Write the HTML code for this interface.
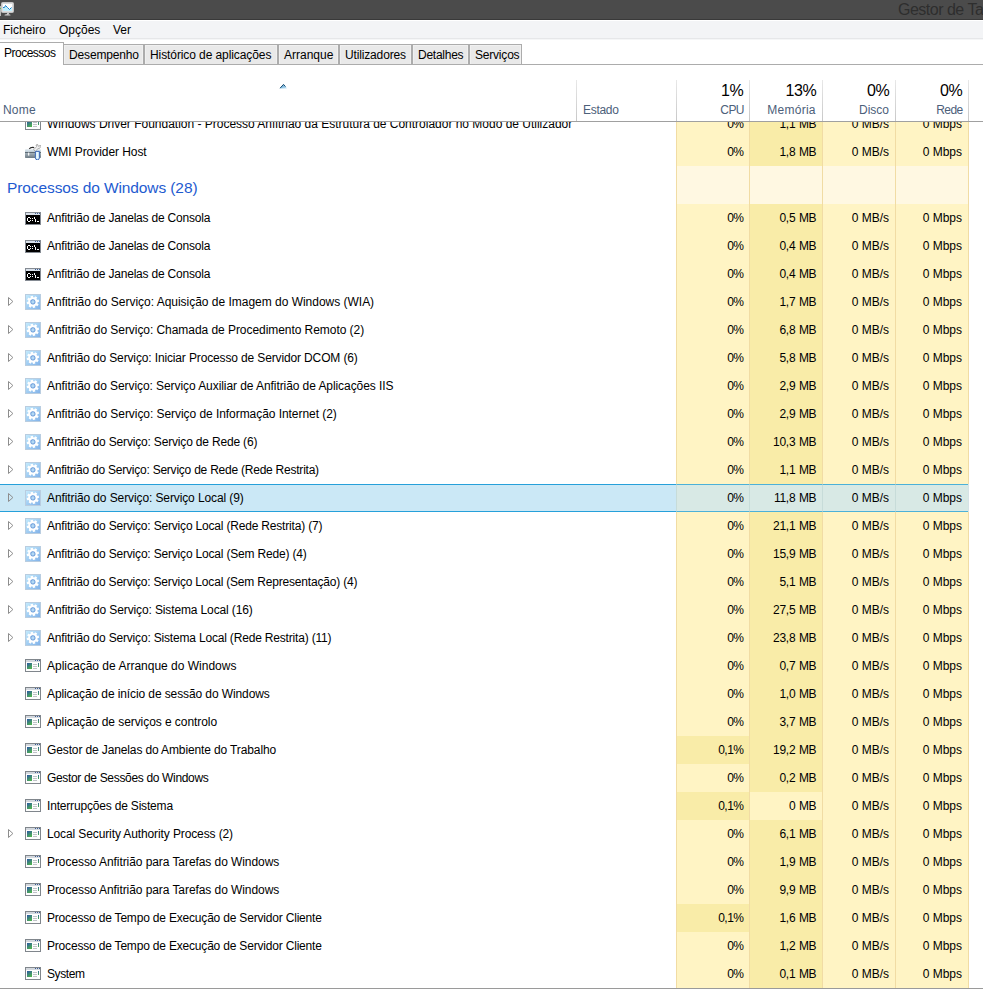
<!DOCTYPE html>
<html><head><meta charset="utf-8">
<style>
*{margin:0;padding:0;box-sizing:border-box}
html,body{width:983px;height:989px;overflow:hidden;background:#fff;font-family:"Liberation Sans",sans-serif;font-size:12px;color:#000}
.abs{position:absolute}
#title{position:absolute;left:0;top:0;width:983px;height:20px;background:#4b4b4b;border-bottom:1px solid #393939}
#title .tt{position:absolute;left:898px;top:1px;letter-spacing:-0.5px;font-size:16px;color:#2e2e2e;white-space:nowrap;line-height:17px}
#wl{position:absolute;left:0;top:20px;width:983px;height:1px;background:#fff}
#menu{position:absolute;left:0;top:21px;width:983px;height:17px;background:#f3f4f6}
#menu span{position:absolute;top:1px;line-height:17px;white-space:nowrap}
#ml1{position:absolute;left:0;top:38px;width:983px;height:1px;background:#e6e7e9}
#ml2{position:absolute;left:0;top:39px;width:983px;height:1px;background:#f5f6f7}
#tabline{position:absolute;left:0;top:64px;width:983px;height:1px;background:#acacac}
.tab{position:absolute;top:44px;height:21px;border:1px solid #acacac;background:#e9e9e9;box-shadow:inset 1px 1px 0 #f0f0f0, inset -1px 0 0 #f0f0f0}
.tab span{position:absolute;left:5px;top:3px;line-height:14px;white-space:nowrap}
.tab.act{top:42px;height:23px;border-left:none;border-bottom:none;background:#fff;box-shadow:none}
.tab.act span{left:4px;top:3px}
.hd{position:absolute;color:#4c607a;white-space:nowrap;line-height:14px}
.hp{position:absolute;top:82px;font-size:16px;line-height:18px;letter-spacing:-0.4px;margin-right:-0.4px;white-space:nowrap}
.hd.r{top:103px}
.dv{position:absolute;top:80px;width:1px;height:41px;background:linear-gradient(#e8e8e8,#c8c8c8)}
#hline{position:absolute;left:0;top:121px;width:983px;height:1px;background:#a0a0a0}
#list{position:absolute;left:0;top:122px;width:983px;height:866px;overflow:hidden}
#inner{position:absolute;left:0;top:-122px;width:983px;height:989px}
.row{position:absolute;left:0;width:983px;height:28px}
.row .nm{position:absolute;left:47px;top:7px;line-height:14px;white-space:nowrap}
.row .ic{position:absolute;left:25px;top:6px}
.row .exp{position:absolute;left:8px;top:9px}
.c{position:absolute;top:0;width:73px;height:28px;border-left:1px solid #f1dca4}
.c span{position:absolute;right:6px;top:7px;line-height:14px;white-space:nowrap}
.grp{position:absolute;left:0;width:983px;height:38px}
.gt{position:absolute;left:7px;top:13px;font-size:15.5px;line-height:18px;letter-spacing:-0.1px;color:#1e5bd0;white-space:nowrap}
.gc{position:absolute;top:0;width:73px;height:38px;background:#fff8e2;border-left:1px solid #f1dca4}
#rb{position:absolute;left:968px;top:122px;width:1px;height:866px;background:#f1dca4}
.row.sel{width:968px;background:#cbe8f6;border-top:1px solid #26a0da;border-bottom:1px solid #26a0da}
.row.sel .nm{top:6px} .row.sel .ic{top:5px} .row.sel .exp{top:8px}
.row.sel .c{top:-1px;height:28px;background:#d8e9e5 !important;border-top:1px solid #4cb1d8;border-bottom:1px solid #4cb1d8;border-left-color:#c7dcd9}
.row.sel .c span{top:6px}
#bline{position:absolute;left:0;top:988px;width:983px;height:1px;background:#9a9a9a}
</style></head><body>
<svg width="0" height="0" style="position:absolute">
<defs>
<linearGradient id="gbl" x1="0" y1="0" x2="1" y2="1"><stop offset="0" stop-color="#c6ecfd"/><stop offset="1" stop-color="#7fb0e8"/></linearGradient>
<linearGradient id="ggr" x1="0" y1="0" x2="0.6" y2="1"><stop offset="0" stop-color="#2c56a8"/><stop offset="1" stop-color="#4caf50"/></linearGradient>
<linearGradient id="gtb" x1="0" y1="0" x2="0" y2="1"><stop offset="0" stop-color="#c9d6de"/><stop offset="1" stop-color="#6d7b85"/></linearGradient>
</defs>
</svg>
<div id="title"><svg class="abs" style="left:0;top:0" width="16" height="16" viewBox="0 0 16 16">
<rect x="1.5" y="2.5" width="12" height="10" rx="1" fill="#dcdcdc" stroke="#c4c4c4"/>
<rect x="3" y="4" width="9" height="7" fill="#ffffff"/>
<path d="M3 7.5 L4.5 7.5 L5.5 5.5 L7.5 7.5 L9.5 9.5 L11.5 7.5 L12 7.5 L12 11 L3 11 Z" fill="#bfeefc"/>
<path d="M3 7.5 L4.5 7.5 L5.5 5.5 L7.5 7.5 L9.5 9.5 L11.5 7.5" fill="none" stroke="#2080c8" stroke-width="1"/>
<rect x="7" y="13" width="2" height="1" fill="#c8c8c8"/>
<path d="M4.5 15.5 Q4.5 14 7.5 14 Q10.5 14 10.5 15.5 Z" fill="#d2d2d2"/>
</svg><div class="abs" style="left:0;top:6px;width:1px;height:10px;background:#b8b8b8"></div><div class="abs" style="left:0;top:8px;width:1px;height:1px;background:#62c050"></div><span class="tt">Gestor de Ta</span></div>
<div id="wl"></div>
<div id="menu"><span style="left:3px">Ficheiro</span><span style="left:59px">Opções</span><span style="left:113px">Ver</span></div>
<div id="ml1"></div><div id="ml2"></div>
<div id="tabline"></div>
<div class="tab act" style="left:0px;width:64px"><span style="letter-spacing:-0.5px">Processos</span></div><div class="tab" style="left:63px;width:81px"><span style="letter-spacing:-0.15px">Desempenho</span></div><div class="tab" style="left:144px;width:134px"><span style="letter-spacing:-0.09px">Histórico de aplicações</span></div><div class="tab" style="left:278px;width:61px"><span style="letter-spacing:0px">Arranque</span></div><div class="tab" style="left:339px;width:73px"><span style="letter-spacing:-0.15px">Utilizadores</span></div><div class="tab" style="left:412px;width:57px"><span style="letter-spacing:-0.26px">Detalhes</span></div><div class="tab" style="left:469px;width:53px"><span style="letter-spacing:-0.2px">Serviços</span></div>
<div class="hd" style="left:3px;top:103px;letter-spacing:0.2px">Nome</div>
<div class="hd" style="left:583px;top:103px;letter-spacing:-0.3px">Estado</div>
<div class="hp" style="right:240px">1%</div><div class="hp" style="right:167px">13%</div><div class="hp" style="right:94px">0%</div><div class="hp" style="right:21px">0%</div>
<div class="hd r" style="right:240px;letter-spacing:-0.6px;margin-right:-0.9px">CPU</div><div class="hd r" style="right:167px;letter-spacing:0.25px;margin-right:0.25px">Memória</div><div class="hd r" style="right:94px">Disco</div><div class="hd r" style="right:21px;letter-spacing:-0.6px;margin-right:-0.6px">Rede</div>
<svg class="abs" style="left:279px;top:83px" width="9" height="6" viewBox="0 0 9 6"><defs><linearGradient id="sa" x1="0" y1="0" x2="1" y2="1"><stop offset="0" stop-color="#3f8fc6"/><stop offset="1" stop-color="#d2eefc"/></linearGradient></defs><path d="M0.8 5.6 L4.5 1.2 L8.2 5.6 Z" fill="url(#sa)"/><path d="M1 5.2 L4.5 1.4 L6.5 3.6" fill="none" stroke="#1e4f72" stroke-width="1"/></svg>
<div class="dv" style="left:576px"></div><div class="dv" style="left:676px"></div><div class="dv" style="left:749px"></div><div class="dv" style="left:822px"></div><div class="dv" style="left:895px"></div><div class="dv" style="left:968px"></div>
<div id="hline"></div>
<div id="list"><div id="inner">
<div class="row" style="top:110px"><svg class="ic" width="16" height="16" viewBox="0 0 16 16" shape-rendering="crispEdges">
<rect x="0" y="1" width="16" height="13" fill="#80868c"/>
<rect x="1" y="2" width="14" height="2" fill="#d3d8de"/>
<rect x="10" y="2" width="1" height="1" fill="#3c5c94"/><rect x="12" y="2" width="1" height="1" fill="#3c5c94"/><rect x="14" y="2" width="1" height="1" fill="#3c5c94"/>
<rect x="1" y="4" width="14" height="9" fill="#fdfdfd"/>
<rect x="2" y="5" width="5" height="6" fill="url(#ggr)"/>
<rect x="8" y="6" width="4" height="1" fill="#bfc3c7"/><rect x="8" y="8" width="4" height="1" fill="#bfc3c7"/><rect x="8" y="10" width="4" height="1" fill="#bfc3c7"/>
<rect x="13" y="5" width="1" height="4" fill="url(#ggr)"/>
</svg><span class="nm" style="letter-spacing:-0.011px">Windows Driver Foundation - Processo Anfitrião da Estrutura de Controlador no Modo de Utilizador</span><div class="c" style="left:676px;background:#fff4c4"><span style="letter-spacing:-0.5px;word-spacing:0px;margin-right:-0.5px">0%</span></div><div class="c" style="left:749px;background:#f9eca8"><span style="letter-spacing:-0.3px;word-spacing:0.6px;margin-right:-0.3px">1,1 MB</span></div><div class="c" style="left:822px;background:#fff4c4"><span style="letter-spacing:0px;word-spacing:0px;margin-right:0px">0 MB/s</span></div><div class="c" style="left:895px;background:#fff4c4"><span style="letter-spacing:0px;word-spacing:0px;margin-right:0px">0 Mbps</span></div></div><div class="row" style="top:138px"><svg class="ic" width="16" height="16" viewBox="0 0 16 16">
<path d="M4.3 5 Q5.5 3 9.2 3.6" fill="none" stroke="#2a2a2a" stroke-width="1.2"/>
<rect x="0" y="5.4" width="16" height="8.6" rx="0.8" fill="url(#gtb)"/>
<rect x="0" y="6" width="16" height="1.6" fill="#d0dde6"/>
<rect x="0" y="8" width="16" height="0.9" fill="#56636e"/>
<rect x="3" y="8.6" width="1.3" height="3" fill="#f6f6f6"/>
<path d="M8.6 5.8 L11.6 2.6 L11 1 L12.6 0.3 L13 2 L14.3 2.3 L15.1 1 L15.8 2.6 L14.6 4.4 L13 4.6 L10.4 7.2 Z" fill="#f2f2f2" stroke="#6e6e6e" stroke-width="0.5"/>
<path d="M10.4 7.4 V13.8 A2 2 0 0 0 14.4 13.8 V7.4 Z" fill="#d6f1fc" stroke="#3f6bb8" stroke-width="1"/>
<rect x="11.6" y="8.2" width="1.2" height="5.6" fill="#f4fcff"/>
</svg><span class="nm" style="letter-spacing:-0.062px">WMI Provider Host</span><div class="c" style="left:676px;background:#fff4c4"><span style="letter-spacing:-0.5px;word-spacing:0px;margin-right:-0.5px">0%</span></div><div class="c" style="left:749px;background:#f9eca8"><span style="letter-spacing:-0.3px;word-spacing:0.6px;margin-right:-0.3px">1,8 MB</span></div><div class="c" style="left:822px;background:#fff4c4"><span style="letter-spacing:0px;word-spacing:0px;margin-right:0px">0 MB/s</span></div><div class="c" style="left:895px;background:#fff4c4"><span style="letter-spacing:0px;word-spacing:0px;margin-right:0px">0 Mbps</span></div></div><div class="grp" style="top:166px"><span class="gt">Processos do Windows (28)</span><div class="gc" style="left:676px"></div><div class="gc" style="left:749px"></div><div class="gc" style="left:822px"></div><div class="gc" style="left:895px"></div></div><div class="row" style="top:204px"><svg class="ic" width="16" height="16" viewBox="0 0 16 16" shape-rendering="crispEdges">
<rect x="0" y="2" width="16" height="13" fill="#858b93"/>
<rect x="1" y="3" width="14" height="2" fill="#d9e1ea"/>
<rect x="10" y="3" width="1" height="1" fill="#3e5f95"/><rect x="12" y="3" width="1" height="1" fill="#3e5f95"/><rect x="14" y="3" width="1" height="1" fill="#3e5f95"/>
<rect x="1" y="5" width="14" height="9" fill="#000"/>
<rect x="3" y="7" width="2" height="1" fill="#fff"/><rect x="2" y="8" width="1" height="3" fill="#fff"/><rect x="3" y="11" width="2" height="1" fill="#fff"/><rect x="5" y="8" width="1" height="1" fill="#fff"/><rect x="5" y="10" width="1" height="1" fill="#fff"/>
<rect x="7" y="8" width="1" height="1" fill="#fff"/><rect x="7" y="10" width="1" height="1" fill="#fff"/>
<rect x="9" y="7" width="1" height="2" fill="#fff"/><rect x="10" y="9" width="1" height="3" fill="#fff"/>
<rect x="12" y="11" width="2" height="1" fill="#fff"/>
</svg><span class="nm" style="letter-spacing:-0.200px">Anfitrião de Janelas de Consola</span><div class="c" style="left:676px;background:#fff4c4"><span style="letter-spacing:-0.5px;word-spacing:0px;margin-right:-0.5px">0%</span></div><div class="c" style="left:749px;background:#f9eca8"><span style="letter-spacing:-0.3px;word-spacing:0.6px;margin-right:-0.3px">0,5 MB</span></div><div class="c" style="left:822px;background:#fff4c4"><span style="letter-spacing:0px;word-spacing:0px;margin-right:0px">0 MB/s</span></div><div class="c" style="left:895px;background:#fff4c4"><span style="letter-spacing:0px;word-spacing:0px;margin-right:0px">0 Mbps</span></div></div><div class="row" style="top:232px"><svg class="ic" width="16" height="16" viewBox="0 0 16 16" shape-rendering="crispEdges">
<rect x="0" y="2" width="16" height="13" fill="#858b93"/>
<rect x="1" y="3" width="14" height="2" fill="#d9e1ea"/>
<rect x="10" y="3" width="1" height="1" fill="#3e5f95"/><rect x="12" y="3" width="1" height="1" fill="#3e5f95"/><rect x="14" y="3" width="1" height="1" fill="#3e5f95"/>
<rect x="1" y="5" width="14" height="9" fill="#000"/>
<rect x="3" y="7" width="2" height="1" fill="#fff"/><rect x="2" y="8" width="1" height="3" fill="#fff"/><rect x="3" y="11" width="2" height="1" fill="#fff"/><rect x="5" y="8" width="1" height="1" fill="#fff"/><rect x="5" y="10" width="1" height="1" fill="#fff"/>
<rect x="7" y="8" width="1" height="1" fill="#fff"/><rect x="7" y="10" width="1" height="1" fill="#fff"/>
<rect x="9" y="7" width="1" height="2" fill="#fff"/><rect x="10" y="9" width="1" height="3" fill="#fff"/>
<rect x="12" y="11" width="2" height="1" fill="#fff"/>
</svg><span class="nm" style="letter-spacing:-0.200px">Anfitrião de Janelas de Consola</span><div class="c" style="left:676px;background:#fff4c4"><span style="letter-spacing:-0.5px;word-spacing:0px;margin-right:-0.5px">0%</span></div><div class="c" style="left:749px;background:#f9eca8"><span style="letter-spacing:-0.3px;word-spacing:0.6px;margin-right:-0.3px">0,4 MB</span></div><div class="c" style="left:822px;background:#fff4c4"><span style="letter-spacing:0px;word-spacing:0px;margin-right:0px">0 MB/s</span></div><div class="c" style="left:895px;background:#fff4c4"><span style="letter-spacing:0px;word-spacing:0px;margin-right:0px">0 Mbps</span></div></div><div class="row" style="top:260px"><svg class="ic" width="16" height="16" viewBox="0 0 16 16" shape-rendering="crispEdges">
<rect x="0" y="2" width="16" height="13" fill="#858b93"/>
<rect x="1" y="3" width="14" height="2" fill="#d9e1ea"/>
<rect x="10" y="3" width="1" height="1" fill="#3e5f95"/><rect x="12" y="3" width="1" height="1" fill="#3e5f95"/><rect x="14" y="3" width="1" height="1" fill="#3e5f95"/>
<rect x="1" y="5" width="14" height="9" fill="#000"/>
<rect x="3" y="7" width="2" height="1" fill="#fff"/><rect x="2" y="8" width="1" height="3" fill="#fff"/><rect x="3" y="11" width="2" height="1" fill="#fff"/><rect x="5" y="8" width="1" height="1" fill="#fff"/><rect x="5" y="10" width="1" height="1" fill="#fff"/>
<rect x="7" y="8" width="1" height="1" fill="#fff"/><rect x="7" y="10" width="1" height="1" fill="#fff"/>
<rect x="9" y="7" width="1" height="2" fill="#fff"/><rect x="10" y="9" width="1" height="3" fill="#fff"/>
<rect x="12" y="11" width="2" height="1" fill="#fff"/>
</svg><span class="nm" style="letter-spacing:-0.200px">Anfitrião de Janelas de Consola</span><div class="c" style="left:676px;background:#fff4c4"><span style="letter-spacing:-0.5px;word-spacing:0px;margin-right:-0.5px">0%</span></div><div class="c" style="left:749px;background:#f9eca8"><span style="letter-spacing:-0.3px;word-spacing:0.6px;margin-right:-0.3px">0,4 MB</span></div><div class="c" style="left:822px;background:#fff4c4"><span style="letter-spacing:0px;word-spacing:0px;margin-right:0px">0 MB/s</span></div><div class="c" style="left:895px;background:#fff4c4"><span style="letter-spacing:0px;word-spacing:0px;margin-right:0px">0 Mbps</span></div></div><div class="row" style="top:288px"><svg class="exp" width="7" height="10" viewBox="0 0 7 10"><path d="M0.5 0.5 L4.9 4.5 L0.5 8.5 Z" fill="none" stroke="#8d8d8d" stroke-width="1"/></svg><svg class="ic" width="16" height="16" viewBox="0 0 16 16">
<rect x="0.5" y="0.5" width="15" height="15" fill="url(#gbl)" stroke="#b9cde0"/>
<g transform="translate(7.9 7.9) rotate(-12)" fill="#fff">
<circle r="4.7"/>
<rect x="-1.2" y="-6.1" width="2.4" height="12.2"/>
<rect x="-1.2" y="-6.1" width="2.4" height="12.2" transform="rotate(45)"/>
<rect x="-1.2" y="-6.1" width="2.4" height="12.2" transform="rotate(90)"/>
<rect x="-1.2" y="-6.1" width="2.4" height="12.2" transform="rotate(135)"/>
<circle r="2.1" fill="#b2d8f4" stroke="#6f9fdb" stroke-width="1"/>
</g>
</svg><span class="nm" style="letter-spacing:-0.018px">Anfitrião do Serviço: Aquisição de Imagem do Windows (WIA)</span><div class="c" style="left:676px;background:#fff4c4"><span style="letter-spacing:-0.5px;word-spacing:0px;margin-right:-0.5px">0%</span></div><div class="c" style="left:749px;background:#f9eca8"><span style="letter-spacing:-0.3px;word-spacing:0.6px;margin-right:-0.3px">1,7 MB</span></div><div class="c" style="left:822px;background:#fff4c4"><span style="letter-spacing:0px;word-spacing:0px;margin-right:0px">0 MB/s</span></div><div class="c" style="left:895px;background:#fff4c4"><span style="letter-spacing:0px;word-spacing:0px;margin-right:0px">0 Mbps</span></div></div><div class="row" style="top:316px"><svg class="exp" width="7" height="10" viewBox="0 0 7 10"><path d="M0.5 0.5 L4.9 4.5 L0.5 8.5 Z" fill="none" stroke="#8d8d8d" stroke-width="1"/></svg><svg class="ic" width="16" height="16" viewBox="0 0 16 16">
<rect x="0.5" y="0.5" width="15" height="15" fill="url(#gbl)" stroke="#b9cde0"/>
<g transform="translate(7.9 7.9) rotate(-12)" fill="#fff">
<circle r="4.7"/>
<rect x="-1.2" y="-6.1" width="2.4" height="12.2"/>
<rect x="-1.2" y="-6.1" width="2.4" height="12.2" transform="rotate(45)"/>
<rect x="-1.2" y="-6.1" width="2.4" height="12.2" transform="rotate(90)"/>
<rect x="-1.2" y="-6.1" width="2.4" height="12.2" transform="rotate(135)"/>
<circle r="2.1" fill="#b2d8f4" stroke="#6f9fdb" stroke-width="1"/>
</g>
</svg><span class="nm" style="letter-spacing:-0.055px">Anfitrião do Serviço: Chamada de Procedimento Remoto (2)</span><div class="c" style="left:676px;background:#fff4c4"><span style="letter-spacing:-0.5px;word-spacing:0px;margin-right:-0.5px">0%</span></div><div class="c" style="left:749px;background:#f9eca8"><span style="letter-spacing:-0.3px;word-spacing:0.6px;margin-right:-0.3px">6,8 MB</span></div><div class="c" style="left:822px;background:#fff4c4"><span style="letter-spacing:0px;word-spacing:0px;margin-right:0px">0 MB/s</span></div><div class="c" style="left:895px;background:#fff4c4"><span style="letter-spacing:0px;word-spacing:0px;margin-right:0px">0 Mbps</span></div></div><div class="row" style="top:344px"><svg class="exp" width="7" height="10" viewBox="0 0 7 10"><path d="M0.5 0.5 L4.9 4.5 L0.5 8.5 Z" fill="none" stroke="#8d8d8d" stroke-width="1"/></svg><svg class="ic" width="16" height="16" viewBox="0 0 16 16">
<rect x="0.5" y="0.5" width="15" height="15" fill="url(#gbl)" stroke="#b9cde0"/>
<g transform="translate(7.9 7.9) rotate(-12)" fill="#fff">
<circle r="4.7"/>
<rect x="-1.2" y="-6.1" width="2.4" height="12.2"/>
<rect x="-1.2" y="-6.1" width="2.4" height="12.2" transform="rotate(45)"/>
<rect x="-1.2" y="-6.1" width="2.4" height="12.2" transform="rotate(90)"/>
<rect x="-1.2" y="-6.1" width="2.4" height="12.2" transform="rotate(135)"/>
<circle r="2.1" fill="#b2d8f4" stroke="#6f9fdb" stroke-width="1"/>
</g>
</svg><span class="nm" style="letter-spacing:-0.138px">Anfitrião do Serviço: Iniciar Processo de Servidor DCOM (6)</span><div class="c" style="left:676px;background:#fff4c4"><span style="letter-spacing:-0.5px;word-spacing:0px;margin-right:-0.5px">0%</span></div><div class="c" style="left:749px;background:#f9eca8"><span style="letter-spacing:-0.3px;word-spacing:0.6px;margin-right:-0.3px">5,8 MB</span></div><div class="c" style="left:822px;background:#fff4c4"><span style="letter-spacing:0px;word-spacing:0px;margin-right:0px">0 MB/s</span></div><div class="c" style="left:895px;background:#fff4c4"><span style="letter-spacing:0px;word-spacing:0px;margin-right:0px">0 Mbps</span></div></div><div class="row" style="top:372px"><svg class="exp" width="7" height="10" viewBox="0 0 7 10"><path d="M0.5 0.5 L4.9 4.5 L0.5 8.5 Z" fill="none" stroke="#8d8d8d" stroke-width="1"/></svg><svg class="ic" width="16" height="16" viewBox="0 0 16 16">
<rect x="0.5" y="0.5" width="15" height="15" fill="url(#gbl)" stroke="#b9cde0"/>
<g transform="translate(7.9 7.9) rotate(-12)" fill="#fff">
<circle r="4.7"/>
<rect x="-1.2" y="-6.1" width="2.4" height="12.2"/>
<rect x="-1.2" y="-6.1" width="2.4" height="12.2" transform="rotate(45)"/>
<rect x="-1.2" y="-6.1" width="2.4" height="12.2" transform="rotate(90)"/>
<rect x="-1.2" y="-6.1" width="2.4" height="12.2" transform="rotate(135)"/>
<circle r="2.1" fill="#b2d8f4" stroke="#6f9fdb" stroke-width="1"/>
</g>
</svg><span class="nm" style="letter-spacing:-0.074px">Anfitrião do Serviço: Serviço Auxiliar de Anfitrião de Aplicações IIS</span><div class="c" style="left:676px;background:#fff4c4"><span style="letter-spacing:-0.5px;word-spacing:0px;margin-right:-0.5px">0%</span></div><div class="c" style="left:749px;background:#f9eca8"><span style="letter-spacing:-0.3px;word-spacing:0.6px;margin-right:-0.3px">2,9 MB</span></div><div class="c" style="left:822px;background:#fff4c4"><span style="letter-spacing:0px;word-spacing:0px;margin-right:0px">0 MB/s</span></div><div class="c" style="left:895px;background:#fff4c4"><span style="letter-spacing:0px;word-spacing:0px;margin-right:0px">0 Mbps</span></div></div><div class="row" style="top:400px"><svg class="exp" width="7" height="10" viewBox="0 0 7 10"><path d="M0.5 0.5 L4.9 4.5 L0.5 8.5 Z" fill="none" stroke="#8d8d8d" stroke-width="1"/></svg><svg class="ic" width="16" height="16" viewBox="0 0 16 16">
<rect x="0.5" y="0.5" width="15" height="15" fill="url(#gbl)" stroke="#b9cde0"/>
<g transform="translate(7.9 7.9) rotate(-12)" fill="#fff">
<circle r="4.7"/>
<rect x="-1.2" y="-6.1" width="2.4" height="12.2"/>
<rect x="-1.2" y="-6.1" width="2.4" height="12.2" transform="rotate(45)"/>
<rect x="-1.2" y="-6.1" width="2.4" height="12.2" transform="rotate(90)"/>
<rect x="-1.2" y="-6.1" width="2.4" height="12.2" transform="rotate(135)"/>
<circle r="2.1" fill="#b2d8f4" stroke="#6f9fdb" stroke-width="1"/>
</g>
</svg><span class="nm" style="letter-spacing:-0.055px">Anfitrião do Serviço: Serviço de Informação Internet (2)</span><div class="c" style="left:676px;background:#fff4c4"><span style="letter-spacing:-0.5px;word-spacing:0px;margin-right:-0.5px">0%</span></div><div class="c" style="left:749px;background:#f9eca8"><span style="letter-spacing:-0.3px;word-spacing:0.6px;margin-right:-0.3px">2,9 MB</span></div><div class="c" style="left:822px;background:#fff4c4"><span style="letter-spacing:0px;word-spacing:0px;margin-right:0px">0 MB/s</span></div><div class="c" style="left:895px;background:#fff4c4"><span style="letter-spacing:0px;word-spacing:0px;margin-right:0px">0 Mbps</span></div></div><div class="row" style="top:428px"><svg class="exp" width="7" height="10" viewBox="0 0 7 10"><path d="M0.5 0.5 L4.9 4.5 L0.5 8.5 Z" fill="none" stroke="#8d8d8d" stroke-width="1"/></svg><svg class="ic" width="16" height="16" viewBox="0 0 16 16">
<rect x="0.5" y="0.5" width="15" height="15" fill="url(#gbl)" stroke="#b9cde0"/>
<g transform="translate(7.9 7.9) rotate(-12)" fill="#fff">
<circle r="4.7"/>
<rect x="-1.2" y="-6.1" width="2.4" height="12.2"/>
<rect x="-1.2" y="-6.1" width="2.4" height="12.2" transform="rotate(45)"/>
<rect x="-1.2" y="-6.1" width="2.4" height="12.2" transform="rotate(90)"/>
<rect x="-1.2" y="-6.1" width="2.4" height="12.2" transform="rotate(135)"/>
<circle r="2.1" fill="#b2d8f4" stroke="#6f9fdb" stroke-width="1"/>
</g>
</svg><span class="nm" style="letter-spacing:-0.175px">Anfitrião do Serviço: Serviço de Rede (6)</span><div class="c" style="left:676px;background:#fff4c4"><span style="letter-spacing:-0.5px;word-spacing:0px;margin-right:-0.5px">0%</span></div><div class="c" style="left:749px;background:#f9eca8"><span style="letter-spacing:-0.3px;word-spacing:0.6px;margin-right:-0.3px">10,3 MB</span></div><div class="c" style="left:822px;background:#fff4c4"><span style="letter-spacing:0px;word-spacing:0px;margin-right:0px">0 MB/s</span></div><div class="c" style="left:895px;background:#fff4c4"><span style="letter-spacing:0px;word-spacing:0px;margin-right:0px">0 Mbps</span></div></div><div class="row" style="top:456px"><svg class="exp" width="7" height="10" viewBox="0 0 7 10"><path d="M0.5 0.5 L4.9 4.5 L0.5 8.5 Z" fill="none" stroke="#8d8d8d" stroke-width="1"/></svg><svg class="ic" width="16" height="16" viewBox="0 0 16 16">
<rect x="0.5" y="0.5" width="15" height="15" fill="url(#gbl)" stroke="#b9cde0"/>
<g transform="translate(7.9 7.9) rotate(-12)" fill="#fff">
<circle r="4.7"/>
<rect x="-1.2" y="-6.1" width="2.4" height="12.2"/>
<rect x="-1.2" y="-6.1" width="2.4" height="12.2" transform="rotate(45)"/>
<rect x="-1.2" y="-6.1" width="2.4" height="12.2" transform="rotate(90)"/>
<rect x="-1.2" y="-6.1" width="2.4" height="12.2" transform="rotate(135)"/>
<circle r="2.1" fill="#b2d8f4" stroke="#6f9fdb" stroke-width="1"/>
</g>
</svg><span class="nm" style="letter-spacing:-0.231px">Anfitrião do Serviço: Serviço de Rede (Rede Restrita)</span><div class="c" style="left:676px;background:#fff4c4"><span style="letter-spacing:-0.5px;word-spacing:0px;margin-right:-0.5px">0%</span></div><div class="c" style="left:749px;background:#f9eca8"><span style="letter-spacing:-0.3px;word-spacing:0.6px;margin-right:-0.3px">1,1 MB</span></div><div class="c" style="left:822px;background:#fff4c4"><span style="letter-spacing:0px;word-spacing:0px;margin-right:0px">0 MB/s</span></div><div class="c" style="left:895px;background:#fff4c4"><span style="letter-spacing:0px;word-spacing:0px;margin-right:0px">0 Mbps</span></div></div><div class="row sel" style="top:484px"><svg class="exp" width="7" height="10" viewBox="0 0 7 10"><path d="M0.5 0.5 L4.9 4.5 L0.5 8.5 Z" fill="none" stroke="#8d8d8d" stroke-width="1"/></svg><svg class="ic" width="16" height="16" viewBox="0 0 16 16">
<rect x="0.5" y="0.5" width="15" height="15" fill="url(#gbl)" stroke="#b9cde0"/>
<g transform="translate(7.9 7.9) rotate(-12)" fill="#fff">
<circle r="4.7"/>
<rect x="-1.2" y="-6.1" width="2.4" height="12.2"/>
<rect x="-1.2" y="-6.1" width="2.4" height="12.2" transform="rotate(45)"/>
<rect x="-1.2" y="-6.1" width="2.4" height="12.2" transform="rotate(90)"/>
<rect x="-1.2" y="-6.1" width="2.4" height="12.2" transform="rotate(135)"/>
<circle r="2.1" fill="#b2d8f4" stroke="#6f9fdb" stroke-width="1"/>
</g>
</svg><span class="nm" style="letter-spacing:-0.105px">Anfitrião do Serviço: Serviço Local (9)</span><div class="c" style="left:676px;background:#fff4c4"><span style="letter-spacing:-0.5px;word-spacing:0px;margin-right:-0.5px">0%</span></div><div class="c" style="left:749px;background:#f9eca8"><span style="letter-spacing:-0.3px;word-spacing:0.6px;margin-right:-0.3px">11,8 MB</span></div><div class="c" style="left:822px;background:#fff4c4"><span style="letter-spacing:0px;word-spacing:0px;margin-right:0px">0 MB/s</span></div><div class="c" style="left:895px;background:#fff4c4"><span style="letter-spacing:0px;word-spacing:0px;margin-right:0px">0 Mbps</span></div></div><div class="row" style="top:512px"><svg class="exp" width="7" height="10" viewBox="0 0 7 10"><path d="M0.5 0.5 L4.9 4.5 L0.5 8.5 Z" fill="none" stroke="#8d8d8d" stroke-width="1"/></svg><svg class="ic" width="16" height="16" viewBox="0 0 16 16">
<rect x="0.5" y="0.5" width="15" height="15" fill="url(#gbl)" stroke="#b9cde0"/>
<g transform="translate(7.9 7.9) rotate(-12)" fill="#fff">
<circle r="4.7"/>
<rect x="-1.2" y="-6.1" width="2.4" height="12.2"/>
<rect x="-1.2" y="-6.1" width="2.4" height="12.2" transform="rotate(45)"/>
<rect x="-1.2" y="-6.1" width="2.4" height="12.2" transform="rotate(90)"/>
<rect x="-1.2" y="-6.1" width="2.4" height="12.2" transform="rotate(135)"/>
<circle r="2.1" fill="#b2d8f4" stroke="#6f9fdb" stroke-width="1"/>
</g>
</svg><span class="nm" style="letter-spacing:-0.185px">Anfitrião do Serviço: Serviço Local (Rede Restrita) (7)</span><div class="c" style="left:676px;background:#fff4c4"><span style="letter-spacing:-0.5px;word-spacing:0px;margin-right:-0.5px">0%</span></div><div class="c" style="left:749px;background:#f9eca8"><span style="letter-spacing:-0.3px;word-spacing:0.6px;margin-right:-0.3px">21,1 MB</span></div><div class="c" style="left:822px;background:#fff4c4"><span style="letter-spacing:0px;word-spacing:0px;margin-right:0px">0 MB/s</span></div><div class="c" style="left:895px;background:#fff4c4"><span style="letter-spacing:0px;word-spacing:0px;margin-right:0px">0 Mbps</span></div></div><div class="row" style="top:540px"><svg class="exp" width="7" height="10" viewBox="0 0 7 10"><path d="M0.5 0.5 L4.9 4.5 L0.5 8.5 Z" fill="none" stroke="#8d8d8d" stroke-width="1"/></svg><svg class="ic" width="16" height="16" viewBox="0 0 16 16">
<rect x="0.5" y="0.5" width="15" height="15" fill="url(#gbl)" stroke="#b9cde0"/>
<g transform="translate(7.9 7.9) rotate(-12)" fill="#fff">
<circle r="4.7"/>
<rect x="-1.2" y="-6.1" width="2.4" height="12.2"/>
<rect x="-1.2" y="-6.1" width="2.4" height="12.2" transform="rotate(45)"/>
<rect x="-1.2" y="-6.1" width="2.4" height="12.2" transform="rotate(90)"/>
<rect x="-1.2" y="-6.1" width="2.4" height="12.2" transform="rotate(135)"/>
<circle r="2.1" fill="#b2d8f4" stroke="#6f9fdb" stroke-width="1"/>
</g>
</svg><span class="nm" style="letter-spacing:-0.184px">Anfitrião do Serviço: Serviço Local (Sem Rede) (4)</span><div class="c" style="left:676px;background:#fff4c4"><span style="letter-spacing:-0.5px;word-spacing:0px;margin-right:-0.5px">0%</span></div><div class="c" style="left:749px;background:#f9eca8"><span style="letter-spacing:-0.3px;word-spacing:0.6px;margin-right:-0.3px">15,9 MB</span></div><div class="c" style="left:822px;background:#fff4c4"><span style="letter-spacing:0px;word-spacing:0px;margin-right:0px">0 MB/s</span></div><div class="c" style="left:895px;background:#fff4c4"><span style="letter-spacing:0px;word-spacing:0px;margin-right:0px">0 Mbps</span></div></div><div class="row" style="top:568px"><svg class="exp" width="7" height="10" viewBox="0 0 7 10"><path d="M0.5 0.5 L4.9 4.5 L0.5 8.5 Z" fill="none" stroke="#8d8d8d" stroke-width="1"/></svg><svg class="ic" width="16" height="16" viewBox="0 0 16 16">
<rect x="0.5" y="0.5" width="15" height="15" fill="url(#gbl)" stroke="#b9cde0"/>
<g transform="translate(7.9 7.9) rotate(-12)" fill="#fff">
<circle r="4.7"/>
<rect x="-1.2" y="-6.1" width="2.4" height="12.2"/>
<rect x="-1.2" y="-6.1" width="2.4" height="12.2" transform="rotate(45)"/>
<rect x="-1.2" y="-6.1" width="2.4" height="12.2" transform="rotate(90)"/>
<rect x="-1.2" y="-6.1" width="2.4" height="12.2" transform="rotate(135)"/>
<circle r="2.1" fill="#b2d8f4" stroke="#6f9fdb" stroke-width="1"/>
</g>
</svg><span class="nm" style="letter-spacing:-0.190px">Anfitrião do Serviço: Serviço Local (Sem Representação) (4)</span><div class="c" style="left:676px;background:#fff4c4"><span style="letter-spacing:-0.5px;word-spacing:0px;margin-right:-0.5px">0%</span></div><div class="c" style="left:749px;background:#f9eca8"><span style="letter-spacing:-0.3px;word-spacing:0.6px;margin-right:-0.3px">5,1 MB</span></div><div class="c" style="left:822px;background:#fff4c4"><span style="letter-spacing:0px;word-spacing:0px;margin-right:0px">0 MB/s</span></div><div class="c" style="left:895px;background:#fff4c4"><span style="letter-spacing:0px;word-spacing:0px;margin-right:0px">0 Mbps</span></div></div><div class="row" style="top:596px"><svg class="exp" width="7" height="10" viewBox="0 0 7 10"><path d="M0.5 0.5 L4.9 4.5 L0.5 8.5 Z" fill="none" stroke="#8d8d8d" stroke-width="1"/></svg><svg class="ic" width="16" height="16" viewBox="0 0 16 16">
<rect x="0.5" y="0.5" width="15" height="15" fill="url(#gbl)" stroke="#b9cde0"/>
<g transform="translate(7.9 7.9) rotate(-12)" fill="#fff">
<circle r="4.7"/>
<rect x="-1.2" y="-6.1" width="2.4" height="12.2"/>
<rect x="-1.2" y="-6.1" width="2.4" height="12.2" transform="rotate(45)"/>
<rect x="-1.2" y="-6.1" width="2.4" height="12.2" transform="rotate(90)"/>
<rect x="-1.2" y="-6.1" width="2.4" height="12.2" transform="rotate(135)"/>
<circle r="2.1" fill="#b2d8f4" stroke="#6f9fdb" stroke-width="1"/>
</g>
</svg><span class="nm" style="letter-spacing:-0.128px">Anfitrião do Serviço: Sistema Local (16)</span><div class="c" style="left:676px;background:#fff4c4"><span style="letter-spacing:-0.5px;word-spacing:0px;margin-right:-0.5px">0%</span></div><div class="c" style="left:749px;background:#f9eca8"><span style="letter-spacing:-0.3px;word-spacing:0.6px;margin-right:-0.3px">27,5 MB</span></div><div class="c" style="left:822px;background:#fff4c4"><span style="letter-spacing:0px;word-spacing:0px;margin-right:0px">0 MB/s</span></div><div class="c" style="left:895px;background:#fff4c4"><span style="letter-spacing:0px;word-spacing:0px;margin-right:0px">0 Mbps</span></div></div><div class="row" style="top:624px"><svg class="exp" width="7" height="10" viewBox="0 0 7 10"><path d="M0.5 0.5 L4.9 4.5 L0.5 8.5 Z" fill="none" stroke="#8d8d8d" stroke-width="1"/></svg><svg class="ic" width="16" height="16" viewBox="0 0 16 16">
<rect x="0.5" y="0.5" width="15" height="15" fill="url(#gbl)" stroke="#b9cde0"/>
<g transform="translate(7.9 7.9) rotate(-12)" fill="#fff">
<circle r="4.7"/>
<rect x="-1.2" y="-6.1" width="2.4" height="12.2"/>
<rect x="-1.2" y="-6.1" width="2.4" height="12.2" transform="rotate(45)"/>
<rect x="-1.2" y="-6.1" width="2.4" height="12.2" transform="rotate(90)"/>
<rect x="-1.2" y="-6.1" width="2.4" height="12.2" transform="rotate(135)"/>
<circle r="2.1" fill="#b2d8f4" stroke="#6f9fdb" stroke-width="1"/>
</g>
</svg><span class="nm" style="letter-spacing:-0.182px">Anfitrião do Serviço: Sistema Local (Rede Restrita) (11)</span><div class="c" style="left:676px;background:#fff4c4"><span style="letter-spacing:-0.5px;word-spacing:0px;margin-right:-0.5px">0%</span></div><div class="c" style="left:749px;background:#f9eca8"><span style="letter-spacing:-0.3px;word-spacing:0.6px;margin-right:-0.3px">23,8 MB</span></div><div class="c" style="left:822px;background:#fff4c4"><span style="letter-spacing:0px;word-spacing:0px;margin-right:0px">0 MB/s</span></div><div class="c" style="left:895px;background:#fff4c4"><span style="letter-spacing:0px;word-spacing:0px;margin-right:0px">0 Mbps</span></div></div><div class="row" style="top:652px"><svg class="ic" width="16" height="16" viewBox="0 0 16 16" shape-rendering="crispEdges">
<rect x="0" y="1" width="16" height="13" fill="#80868c"/>
<rect x="1" y="2" width="14" height="2" fill="#d3d8de"/>
<rect x="10" y="2" width="1" height="1" fill="#3c5c94"/><rect x="12" y="2" width="1" height="1" fill="#3c5c94"/><rect x="14" y="2" width="1" height="1" fill="#3c5c94"/>
<rect x="1" y="4" width="14" height="9" fill="#fdfdfd"/>
<rect x="2" y="5" width="5" height="6" fill="url(#ggr)"/>
<rect x="8" y="6" width="4" height="1" fill="#bfc3c7"/><rect x="8" y="8" width="4" height="1" fill="#bfc3c7"/><rect x="8" y="10" width="4" height="1" fill="#bfc3c7"/>
<rect x="13" y="5" width="1" height="4" fill="url(#ggr)"/>
</svg><span class="nm" style="letter-spacing:0.000px">Aplicação de Arranque do Windows</span><div class="c" style="left:676px;background:#fff4c4"><span style="letter-spacing:-0.5px;word-spacing:0px;margin-right:-0.5px">0%</span></div><div class="c" style="left:749px;background:#f9eca8"><span style="letter-spacing:-0.3px;word-spacing:0.6px;margin-right:-0.3px">0,7 MB</span></div><div class="c" style="left:822px;background:#fff4c4"><span style="letter-spacing:0px;word-spacing:0px;margin-right:0px">0 MB/s</span></div><div class="c" style="left:895px;background:#fff4c4"><span style="letter-spacing:0px;word-spacing:0px;margin-right:0px">0 Mbps</span></div></div><div class="row" style="top:680px"><svg class="ic" width="16" height="16" viewBox="0 0 16 16" shape-rendering="crispEdges">
<rect x="0" y="1" width="16" height="13" fill="#80868c"/>
<rect x="1" y="2" width="14" height="2" fill="#d3d8de"/>
<rect x="10" y="2" width="1" height="1" fill="#3c5c94"/><rect x="12" y="2" width="1" height="1" fill="#3c5c94"/><rect x="14" y="2" width="1" height="1" fill="#3c5c94"/>
<rect x="1" y="4" width="14" height="9" fill="#fdfdfd"/>
<rect x="2" y="5" width="5" height="6" fill="url(#ggr)"/>
<rect x="8" y="6" width="4" height="1" fill="#bfc3c7"/><rect x="8" y="8" width="4" height="1" fill="#bfc3c7"/><rect x="8" y="10" width="4" height="1" fill="#bfc3c7"/>
<rect x="13" y="5" width="1" height="4" fill="url(#ggr)"/>
</svg><span class="nm" style="letter-spacing:-0.103px">Aplicação de início de sessão do Windows</span><div class="c" style="left:676px;background:#fff4c4"><span style="letter-spacing:-0.5px;word-spacing:0px;margin-right:-0.5px">0%</span></div><div class="c" style="left:749px;background:#f9eca8"><span style="letter-spacing:-0.3px;word-spacing:0.6px;margin-right:-0.3px">1,0 MB</span></div><div class="c" style="left:822px;background:#fff4c4"><span style="letter-spacing:0px;word-spacing:0px;margin-right:0px">0 MB/s</span></div><div class="c" style="left:895px;background:#fff4c4"><span style="letter-spacing:0px;word-spacing:0px;margin-right:0px">0 Mbps</span></div></div><div class="row" style="top:708px"><svg class="ic" width="16" height="16" viewBox="0 0 16 16" shape-rendering="crispEdges">
<rect x="0" y="1" width="16" height="13" fill="#80868c"/>
<rect x="1" y="2" width="14" height="2" fill="#d3d8de"/>
<rect x="10" y="2" width="1" height="1" fill="#3c5c94"/><rect x="12" y="2" width="1" height="1" fill="#3c5c94"/><rect x="14" y="2" width="1" height="1" fill="#3c5c94"/>
<rect x="1" y="4" width="14" height="9" fill="#fdfdfd"/>
<rect x="2" y="5" width="5" height="6" fill="url(#ggr)"/>
<rect x="8" y="6" width="4" height="1" fill="#bfc3c7"/><rect x="8" y="8" width="4" height="1" fill="#bfc3c7"/><rect x="8" y="10" width="4" height="1" fill="#bfc3c7"/>
<rect x="13" y="5" width="1" height="4" fill="url(#ggr)"/>
</svg><span class="nm" style="letter-spacing:-0.065px">Aplicação de serviços e controlo</span><div class="c" style="left:676px;background:#fff4c4"><span style="letter-spacing:-0.5px;word-spacing:0px;margin-right:-0.5px">0%</span></div><div class="c" style="left:749px;background:#f9eca8"><span style="letter-spacing:-0.3px;word-spacing:0.6px;margin-right:-0.3px">3,7 MB</span></div><div class="c" style="left:822px;background:#fff4c4"><span style="letter-spacing:0px;word-spacing:0px;margin-right:0px">0 MB/s</span></div><div class="c" style="left:895px;background:#fff4c4"><span style="letter-spacing:0px;word-spacing:0px;margin-right:0px">0 Mbps</span></div></div><div class="row" style="top:736px"><svg class="ic" width="16" height="16" viewBox="0 0 16 16" shape-rendering="crispEdges">
<rect x="0" y="1" width="16" height="13" fill="#80868c"/>
<rect x="1" y="2" width="14" height="2" fill="#d3d8de"/>
<rect x="10" y="2" width="1" height="1" fill="#3c5c94"/><rect x="12" y="2" width="1" height="1" fill="#3c5c94"/><rect x="14" y="2" width="1" height="1" fill="#3c5c94"/>
<rect x="1" y="4" width="14" height="9" fill="#fdfdfd"/>
<rect x="2" y="5" width="5" height="6" fill="url(#ggr)"/>
<rect x="8" y="6" width="4" height="1" fill="#bfc3c7"/><rect x="8" y="8" width="4" height="1" fill="#bfc3c7"/><rect x="8" y="10" width="4" height="1" fill="#bfc3c7"/>
<rect x="13" y="5" width="1" height="4" fill="url(#ggr)"/>
</svg><span class="nm" style="letter-spacing:-0.125px">Gestor de Janelas do Ambiente do Trabalho</span><div class="c" style="left:676px;background:#f9eca8"><span style="letter-spacing:-0.5px;word-spacing:0px;margin-right:-0.5px">0,1%</span></div><div class="c" style="left:749px;background:#f9eca8"><span style="letter-spacing:-0.3px;word-spacing:0.6px;margin-right:-0.3px">19,2 MB</span></div><div class="c" style="left:822px;background:#fff4c4"><span style="letter-spacing:0px;word-spacing:0px;margin-right:0px">0 MB/s</span></div><div class="c" style="left:895px;background:#fff4c4"><span style="letter-spacing:0px;word-spacing:0px;margin-right:0px">0 Mbps</span></div></div><div class="row" style="top:764px"><svg class="ic" width="16" height="16" viewBox="0 0 16 16" shape-rendering="crispEdges">
<rect x="0" y="1" width="16" height="13" fill="#80868c"/>
<rect x="1" y="2" width="14" height="2" fill="#d3d8de"/>
<rect x="10" y="2" width="1" height="1" fill="#3c5c94"/><rect x="12" y="2" width="1" height="1" fill="#3c5c94"/><rect x="14" y="2" width="1" height="1" fill="#3c5c94"/>
<rect x="1" y="4" width="14" height="9" fill="#fdfdfd"/>
<rect x="2" y="5" width="5" height="6" fill="url(#ggr)"/>
<rect x="8" y="6" width="4" height="1" fill="#bfc3c7"/><rect x="8" y="8" width="4" height="1" fill="#bfc3c7"/><rect x="8" y="10" width="4" height="1" fill="#bfc3c7"/>
<rect x="13" y="5" width="1" height="4" fill="url(#ggr)"/>
</svg><span class="nm" style="letter-spacing:-0.333px">Gestor de Sessões do Windows</span><div class="c" style="left:676px;background:#fff4c4"><span style="letter-spacing:-0.5px;word-spacing:0px;margin-right:-0.5px">0%</span></div><div class="c" style="left:749px;background:#f9eca8"><span style="letter-spacing:-0.3px;word-spacing:0.6px;margin-right:-0.3px">0,2 MB</span></div><div class="c" style="left:822px;background:#fff4c4"><span style="letter-spacing:0px;word-spacing:0px;margin-right:0px">0 MB/s</span></div><div class="c" style="left:895px;background:#fff4c4"><span style="letter-spacing:0px;word-spacing:0px;margin-right:0px">0 Mbps</span></div></div><div class="row" style="top:792px"><svg class="ic" width="16" height="16" viewBox="0 0 16 16" shape-rendering="crispEdges">
<rect x="0" y="1" width="16" height="13" fill="#80868c"/>
<rect x="1" y="2" width="14" height="2" fill="#d3d8de"/>
<rect x="10" y="2" width="1" height="1" fill="#3c5c94"/><rect x="12" y="2" width="1" height="1" fill="#3c5c94"/><rect x="14" y="2" width="1" height="1" fill="#3c5c94"/>
<rect x="1" y="4" width="14" height="9" fill="#fdfdfd"/>
<rect x="2" y="5" width="5" height="6" fill="url(#ggr)"/>
<rect x="8" y="6" width="4" height="1" fill="#bfc3c7"/><rect x="8" y="8" width="4" height="1" fill="#bfc3c7"/><rect x="8" y="10" width="4" height="1" fill="#bfc3c7"/>
<rect x="13" y="5" width="1" height="4" fill="url(#ggr)"/>
</svg><span class="nm" style="letter-spacing:-0.182px">Interrupções de Sistema</span><div class="c" style="left:676px;background:#f9eca8"><span style="letter-spacing:-0.5px;word-spacing:0px;margin-right:-0.5px">0,1%</span></div><div class="c" style="left:749px;background:#fff4c4"><span style="letter-spacing:-0.3px;word-spacing:0.6px;margin-right:-0.3px">0 MB</span></div><div class="c" style="left:822px;background:#fff4c4"><span style="letter-spacing:0px;word-spacing:0px;margin-right:0px">0 MB/s</span></div><div class="c" style="left:895px;background:#fff4c4"><span style="letter-spacing:0px;word-spacing:0px;margin-right:0px">0 Mbps</span></div></div><div class="row" style="top:820px"><svg class="exp" width="7" height="10" viewBox="0 0 7 10"><path d="M0.5 0.5 L4.9 4.5 L0.5 8.5 Z" fill="none" stroke="#8d8d8d" stroke-width="1"/></svg><svg class="ic" width="16" height="16" viewBox="0 0 16 16" shape-rendering="crispEdges">
<rect x="0" y="1" width="16" height="13" fill="#80868c"/>
<rect x="1" y="2" width="14" height="2" fill="#d3d8de"/>
<rect x="10" y="2" width="1" height="1" fill="#3c5c94"/><rect x="12" y="2" width="1" height="1" fill="#3c5c94"/><rect x="14" y="2" width="1" height="1" fill="#3c5c94"/>
<rect x="1" y="4" width="14" height="9" fill="#fdfdfd"/>
<rect x="2" y="5" width="5" height="6" fill="url(#ggr)"/>
<rect x="8" y="6" width="4" height="1" fill="#bfc3c7"/><rect x="8" y="8" width="4" height="1" fill="#bfc3c7"/><rect x="8" y="10" width="4" height="1" fill="#bfc3c7"/>
<rect x="13" y="5" width="1" height="4" fill="url(#ggr)"/>
</svg><span class="nm" style="letter-spacing:-0.114px">Local Security Authority Process (2)</span><div class="c" style="left:676px;background:#fff4c4"><span style="letter-spacing:-0.5px;word-spacing:0px;margin-right:-0.5px">0%</span></div><div class="c" style="left:749px;background:#f9eca8"><span style="letter-spacing:-0.3px;word-spacing:0.6px;margin-right:-0.3px">6,1 MB</span></div><div class="c" style="left:822px;background:#fff4c4"><span style="letter-spacing:0px;word-spacing:0px;margin-right:0px">0 MB/s</span></div><div class="c" style="left:895px;background:#fff4c4"><span style="letter-spacing:0px;word-spacing:0px;margin-right:0px">0 Mbps</span></div></div><div class="row" style="top:848px"><svg class="ic" width="16" height="16" viewBox="0 0 16 16" shape-rendering="crispEdges">
<rect x="0" y="1" width="16" height="13" fill="#80868c"/>
<rect x="1" y="2" width="14" height="2" fill="#d3d8de"/>
<rect x="10" y="2" width="1" height="1" fill="#3c5c94"/><rect x="12" y="2" width="1" height="1" fill="#3c5c94"/><rect x="14" y="2" width="1" height="1" fill="#3c5c94"/>
<rect x="1" y="4" width="14" height="9" fill="#fdfdfd"/>
<rect x="2" y="5" width="5" height="6" fill="url(#ggr)"/>
<rect x="8" y="6" width="4" height="1" fill="#bfc3c7"/><rect x="8" y="8" width="4" height="1" fill="#bfc3c7"/><rect x="8" y="10" width="4" height="1" fill="#bfc3c7"/>
<rect x="13" y="5" width="1" height="4" fill="url(#ggr)"/>
</svg><span class="nm" style="letter-spacing:-0.073px">Processo Anfitrião para Tarefas do Windows</span><div class="c" style="left:676px;background:#fff4c4"><span style="letter-spacing:-0.5px;word-spacing:0px;margin-right:-0.5px">0%</span></div><div class="c" style="left:749px;background:#f9eca8"><span style="letter-spacing:-0.3px;word-spacing:0.6px;margin-right:-0.3px">1,9 MB</span></div><div class="c" style="left:822px;background:#fff4c4"><span style="letter-spacing:0px;word-spacing:0px;margin-right:0px">0 MB/s</span></div><div class="c" style="left:895px;background:#fff4c4"><span style="letter-spacing:0px;word-spacing:0px;margin-right:0px">0 Mbps</span></div></div><div class="row" style="top:876px"><svg class="ic" width="16" height="16" viewBox="0 0 16 16" shape-rendering="crispEdges">
<rect x="0" y="1" width="16" height="13" fill="#80868c"/>
<rect x="1" y="2" width="14" height="2" fill="#d3d8de"/>
<rect x="10" y="2" width="1" height="1" fill="#3c5c94"/><rect x="12" y="2" width="1" height="1" fill="#3c5c94"/><rect x="14" y="2" width="1" height="1" fill="#3c5c94"/>
<rect x="1" y="4" width="14" height="9" fill="#fdfdfd"/>
<rect x="2" y="5" width="5" height="6" fill="url(#ggr)"/>
<rect x="8" y="6" width="4" height="1" fill="#bfc3c7"/><rect x="8" y="8" width="4" height="1" fill="#bfc3c7"/><rect x="8" y="10" width="4" height="1" fill="#bfc3c7"/>
<rect x="13" y="5" width="1" height="4" fill="url(#ggr)"/>
</svg><span class="nm" style="letter-spacing:-0.073px">Processo Anfitrião para Tarefas do Windows</span><div class="c" style="left:676px;background:#fff4c4"><span style="letter-spacing:-0.5px;word-spacing:0px;margin-right:-0.5px">0%</span></div><div class="c" style="left:749px;background:#f9eca8"><span style="letter-spacing:-0.3px;word-spacing:0.6px;margin-right:-0.3px">9,9 MB</span></div><div class="c" style="left:822px;background:#fff4c4"><span style="letter-spacing:0px;word-spacing:0px;margin-right:0px">0 MB/s</span></div><div class="c" style="left:895px;background:#fff4c4"><span style="letter-spacing:0px;word-spacing:0px;margin-right:0px">0 Mbps</span></div></div><div class="row" style="top:904px"><svg class="ic" width="16" height="16" viewBox="0 0 16 16" shape-rendering="crispEdges">
<rect x="0" y="1" width="16" height="13" fill="#80868c"/>
<rect x="1" y="2" width="14" height="2" fill="#d3d8de"/>
<rect x="10" y="2" width="1" height="1" fill="#3c5c94"/><rect x="12" y="2" width="1" height="1" fill="#3c5c94"/><rect x="14" y="2" width="1" height="1" fill="#3c5c94"/>
<rect x="1" y="4" width="14" height="9" fill="#fdfdfd"/>
<rect x="2" y="5" width="5" height="6" fill="url(#ggr)"/>
<rect x="8" y="6" width="4" height="1" fill="#bfc3c7"/><rect x="8" y="8" width="4" height="1" fill="#bfc3c7"/><rect x="8" y="10" width="4" height="1" fill="#bfc3c7"/>
<rect x="13" y="5" width="1" height="4" fill="url(#ggr)"/>
</svg><span class="nm" style="letter-spacing:-0.188px">Processo de Tempo de Execução de Servidor Cliente</span><div class="c" style="left:676px;background:#f9eca8"><span style="letter-spacing:-0.5px;word-spacing:0px;margin-right:-0.5px">0,1%</span></div><div class="c" style="left:749px;background:#f9eca8"><span style="letter-spacing:-0.3px;word-spacing:0.6px;margin-right:-0.3px">1,6 MB</span></div><div class="c" style="left:822px;background:#fff4c4"><span style="letter-spacing:0px;word-spacing:0px;margin-right:0px">0 MB/s</span></div><div class="c" style="left:895px;background:#fff4c4"><span style="letter-spacing:0px;word-spacing:0px;margin-right:0px">0 Mbps</span></div></div><div class="row" style="top:932px"><svg class="ic" width="16" height="16" viewBox="0 0 16 16" shape-rendering="crispEdges">
<rect x="0" y="1" width="16" height="13" fill="#80868c"/>
<rect x="1" y="2" width="14" height="2" fill="#d3d8de"/>
<rect x="10" y="2" width="1" height="1" fill="#3c5c94"/><rect x="12" y="2" width="1" height="1" fill="#3c5c94"/><rect x="14" y="2" width="1" height="1" fill="#3c5c94"/>
<rect x="1" y="4" width="14" height="9" fill="#fdfdfd"/>
<rect x="2" y="5" width="5" height="6" fill="url(#ggr)"/>
<rect x="8" y="6" width="4" height="1" fill="#bfc3c7"/><rect x="8" y="8" width="4" height="1" fill="#bfc3c7"/><rect x="8" y="10" width="4" height="1" fill="#bfc3c7"/>
<rect x="13" y="5" width="1" height="4" fill="url(#ggr)"/>
</svg><span class="nm" style="letter-spacing:-0.188px">Processo de Tempo de Execução de Servidor Cliente</span><div class="c" style="left:676px;background:#fff4c4"><span style="letter-spacing:-0.5px;word-spacing:0px;margin-right:-0.5px">0%</span></div><div class="c" style="left:749px;background:#f9eca8"><span style="letter-spacing:-0.3px;word-spacing:0.6px;margin-right:-0.3px">1,2 MB</span></div><div class="c" style="left:822px;background:#fff4c4"><span style="letter-spacing:0px;word-spacing:0px;margin-right:0px">0 MB/s</span></div><div class="c" style="left:895px;background:#fff4c4"><span style="letter-spacing:0px;word-spacing:0px;margin-right:0px">0 Mbps</span></div></div><div class="row" style="top:960px"><svg class="ic" width="16" height="16" viewBox="0 0 16 16" shape-rendering="crispEdges">
<rect x="0" y="1" width="16" height="13" fill="#80868c"/>
<rect x="1" y="2" width="14" height="2" fill="#d3d8de"/>
<rect x="10" y="2" width="1" height="1" fill="#3c5c94"/><rect x="12" y="2" width="1" height="1" fill="#3c5c94"/><rect x="14" y="2" width="1" height="1" fill="#3c5c94"/>
<rect x="1" y="4" width="14" height="9" fill="#fdfdfd"/>
<rect x="2" y="5" width="5" height="6" fill="url(#ggr)"/>
<rect x="8" y="6" width="4" height="1" fill="#bfc3c7"/><rect x="8" y="8" width="4" height="1" fill="#bfc3c7"/><rect x="8" y="10" width="4" height="1" fill="#bfc3c7"/>
<rect x="13" y="5" width="1" height="4" fill="url(#ggr)"/>
</svg><span class="nm" style="letter-spacing:-0.400px">System</span><div class="c" style="left:676px;background:#fff4c4"><span style="letter-spacing:-0.5px;word-spacing:0px;margin-right:-0.5px">0%</span></div><div class="c" style="left:749px;background:#f9eca8"><span style="letter-spacing:-0.3px;word-spacing:0.6px;margin-right:-0.3px">0,1 MB</span></div><div class="c" style="left:822px;background:#fff4c4"><span style="letter-spacing:0px;word-spacing:0px;margin-right:0px">0 MB/s</span></div><div class="c" style="left:895px;background:#fff4c4"><span style="letter-spacing:0px;word-spacing:0px;margin-right:0px">0 Mbps</span></div></div>
</div><div id="rb" style="top:0"></div><div class="abs" style="left:968px;top:362px;width:1px;height:28px;background:#d6e3e6"></div></div>
<div id="bline"></div>
</body></html>
